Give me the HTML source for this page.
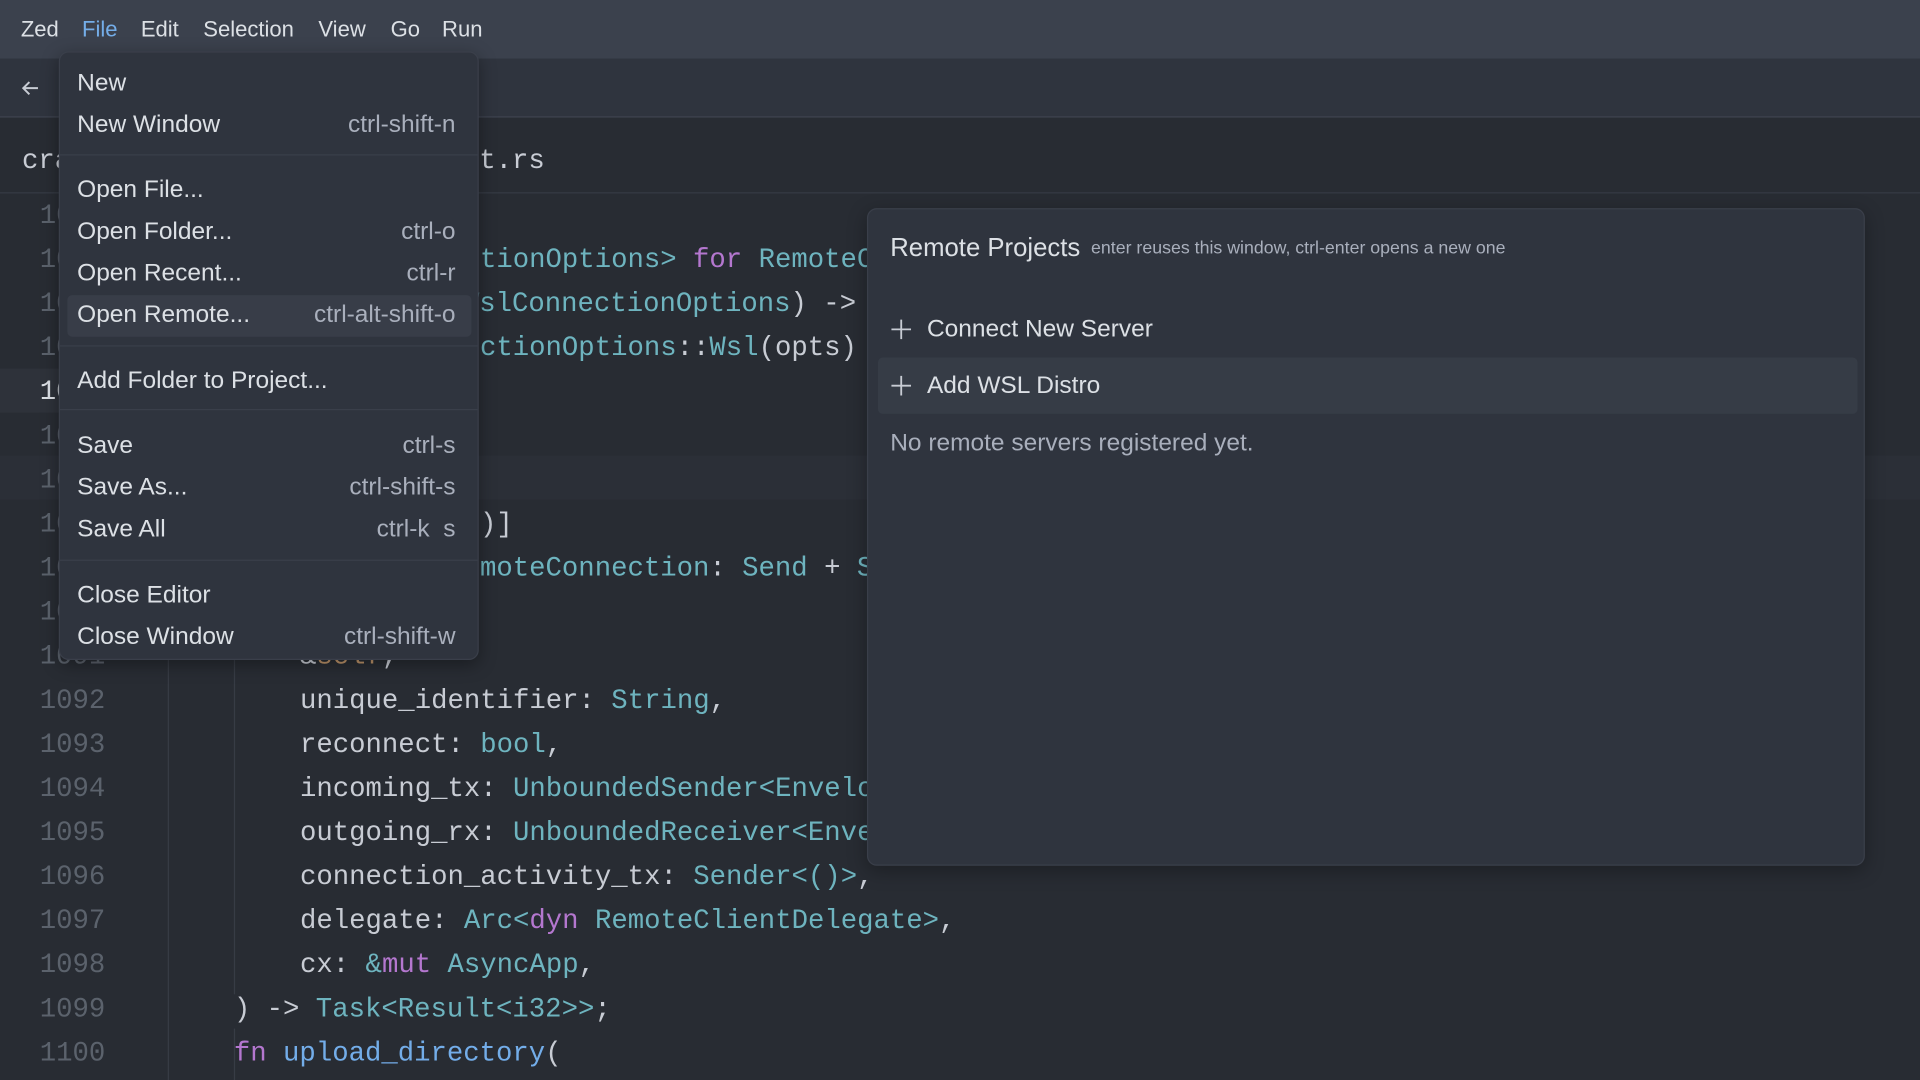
<!DOCTYPE html>
<html><head><meta charset="utf-8"><style>
*{margin:0;padding:0;box-sizing:border-box}
html,body{width:1920px;height:1080px;overflow:hidden;background:#282c33}
#w{position:absolute;left:0;top:0;width:1568px;height:882px;transform:scale(1.22449);transform-origin:0 0;background:#282c33;font-family:"Liberation Sans",sans-serif;color:#dce0e5}
.a{position:absolute;white-space:pre}
.m{font-family:"Liberation Mono",monospace;font-size:22.3px;color:#c8ccd4}
.ln{color:#5b626c;width:56px;text-align:right;left:30px}
.t{color:#6eb4bf}.k{color:#b477cf}.f{color:#73ade9}.o{color:#bf956a}
.mi{position:absolute;left:63px;right:18px;font-size:20px;color:#dce0e5;height:34px;line-height:34px}
.mi span{position:absolute;right:0;color:#a9afbc}
.sep{position:absolute;left:0;right:0;height:1px;background:#3a3f4a}
</style></head><body><div id="w">
<div class="a" style="left:0;top:0;width:1568px;height:48px;background:#3b414d"></div>
<div class="a" style="top:14px;left:17px;font-size:18px;color:#dce0e5">Zed</div>
<div class="a" style="top:14px;left:67px;font-size:18px;color:#74ade8">File</div>
<div class="a" style="top:14px;left:115px;font-size:18px">Edit</div>
<div class="a" style="top:14px;left:166px;font-size:18px">Selection</div>
<div class="a" style="top:14px;left:260px;font-size:18px">View</div>
<div class="a" style="top:14px;left:319px;font-size:18px">Go</div>
<div class="a" style="top:14px;left:361px;font-size:18px">Run</div>
<div class="a" style="left:0;top:48px;width:1568px;height:48px;background:#2f343e;border-bottom:1px solid #3f4450"></div>
<svg class="a" style="left:16px;top:63px" width="18" height="18" viewBox="0 0 18 18"><path d="M15 9H3M8 4L3 9l5 5" fill="none" stroke="#c8ccd4" stroke-width="1.6"/></svg>
<div class="a" style="left:0;top:97px;width:1568px;height:61px;background:#282c33;border-bottom:1px solid #363b45"></div>
<div class="a m" style="left:18px;top:118px">cra</div>
<div class="a m" style="left:378px;top:118px">nt.rs</div>
<div class="a" style="left:0;top:301px;width:137px;height:36px;background:#2e323a"></div>
<div class="a" style="left:0;top:372px;width:1568px;height:36px;background:#2b2f37"></div>
<div class="a" style="left:137px;top:160px;width:1px;height:722px;background:#373c45"></div>
<div class="a" style="left:191px;top:530px;width:1px;height:282px;background:#373c45"></div>
<div class="a" style="left:191px;top:840px;width:1px;height:42px;background:#373c45"></div>
<div class="a m ln" style="top:163px">1081</div>
<div class="a m ln" style="top:199px">1082</div>
<div class="a m ln" style="top:235px">1083</div>
<div class="a m ln" style="top:271px">1084</div>
<div class="a m ln" style="top:307px;color:#dce0e5">1085</div>
<div class="a m ln" style="top:343px">1086</div>
<div class="a m ln" style="top:379px">1087</div>
<div class="a m ln" style="top:415px">1088</div>
<div class="a m ln" style="top:451px">1089</div>
<div class="a m ln" style="top:487px">1090</div>
<div class="a m ln" style="top:523px">1091</div>
<div class="a m ln" style="top:559px">1092</div>
<div class="a m ln" style="top:595px">1093</div>
<div class="a m ln" style="top:631px">1094</div>
<div class="a m ln" style="top:667px">1095</div>
<div class="a m ln" style="top:703px">1096</div>
<div class="a m ln" style="top:739px">1097</div>
<div class="a m ln" style="top:775px">1098</div>
<div class="a m ln" style="top:811px">1099</div>
<div class="a m ln" style="top:847px">1100</div>
<div class="a m" style="left:392px;top:199px"><span class="t">tionOptions&gt;</span> <span class="k">for</span> <span class="t">RemoteC</span></div>
<div class="a m" style="left:378px;top:235px"><span class="t">WslConnectionOptions</span>) -&gt;</div>
<div class="a m" style="left:392px;top:271px"><span class="t">ctionOptions</span>::<span class="t">Wsl</span>(opts)</div>
<div class="a m" style="left:392px;top:415px">)]</div>
<div class="a m" style="left:392px;top:451px"><span class="t">moteConnection</span>: <span class="t">Send</span> + <span class="t">S</span></div>
<div class="a m" style="left:245px;top:523px">&amp;<span class="o">self</span>,</div>
<div class="a m" style="left:245px;top:559px">unique_identifier: <span class="t">String</span>,</div>
<div class="a m" style="left:245px;top:595px">reconnect: <span class="t">bool</span>,</div>
<div class="a m" style="left:245px;top:631px">incoming_tx: <span class="t">UnboundedSender&lt;Envelope</span></div>
<div class="a m" style="left:245px;top:667px">outgoing_rx: <span class="t">UnboundedReceiver&lt;Envel</span></div>
<div class="a m" style="left:245px;top:703px">connection_activity_tx: <span class="t">Sender&lt;()&gt;</span>,</div>
<div class="a m" style="left:245px;top:739px">delegate: <span class="t">Arc&lt;</span><span class="k">dyn</span> <span class="t">RemoteClientDelegate&gt;</span>,</div>
<div class="a m" style="left:245px;top:775px">cx: <span class="t">&amp;</span><span class="k">mut</span> <span class="t">AsyncApp</span>,</div>
<div class="a m" style="left:191px;top:811px">) -&gt; <span class="t">Task&lt;Result&lt;i32&gt;&gt;</span>;</div>
<div class="a m" style="left:191px;top:847px"><span class="k">fn</span> <span class="f">upload_directory</span>(</div>
<div class="a" style="left:708px;top:170px;width:815px;height:537px;background:#2f343e;border:1px solid #3a3f4a;border-radius:8px;box-shadow:0 4px 16px rgba(0,0,0,.3)">
 <div class="a" style="left:18px;top:20px;font-size:21px;color:#dce0e5">Remote Projects</div>
 <div class="a" style="left:182px;top:24px;font-size:14.5px;color:#a9afbc">enter reuses this window, ctrl-enter opens a new one</div>
 <div class="a" style="left:8px;top:121px;width:800px;height:46px;background:#363c46;border-radius:4px"></div>
 <svg class="a" style="left:18px;top:89px" width="18" height="18" viewBox="0 0 18 18"><path d="M9 1v16M1 9h16" stroke="#c8ccd4" stroke-width="1.5"/></svg>
 <div class="a" style="left:48px;top:87px;font-size:20px">Connect New Server</div>
 <svg class="a" style="left:18px;top:135px" width="18" height="18" viewBox="0 0 18 18"><path d="M9 1v16M1 9h16" stroke="#c8ccd4" stroke-width="1.5"/></svg>
 <div class="a" style="left:48px;top:133px;font-size:20px">Add WSL Distro</div>
 <div class="a" style="left:18px;top:180px;font-size:20px;color:#a9afbc">No remote servers registered yet.</div>
</div>
<div class="a" style="left:48px;top:42px;width:343px;height:497px;background:#2f343e;border:1px solid #3a3f4a;border-radius:8px;box-shadow:0 4px 14px rgba(0,0,0,.35)">
 <div class="mi" style="top:8px;left:14px">New</div>
 <div class="mi" style="top:42px;left:14px">New Window<span>ctrl-shift-n</span></div>
 <div class="sep" style="top:83px"></div>
 <div class="mi" style="top:95px;left:14px">Open File...</div>
 <div class="mi" style="top:129px;left:14px">Open Folder...<span>ctrl-o</span></div>
 <div class="mi" style="top:163px;left:14px">Open Recent...<span>ctrl-r</span></div>
 <div class="a" style="left:6px;top:198px;width:330px;height:34px;background:#383d48;border-radius:4px"></div>
 <div class="mi" style="top:197px;left:14px">Open Remote...<span>ctrl-alt-shift-o</span></div>
 <div class="sep" style="top:239px"></div>
 <div class="mi" style="top:251px;left:14px">Add Folder to Project...</div>
 <div class="sep" style="top:291px"></div>
 <div class="mi" style="top:304px;left:14px">Save<span>ctrl-s</span></div>
 <div class="mi" style="top:338px;left:14px">Save As...<span>ctrl-shift-s</span></div>
 <div class="mi" style="top:372px;left:14px">Save All<span>ctrl-k&nbsp; s</span></div>
 <div class="sep" style="top:414px"></div>
 <div class="mi" style="top:426px;left:14px">Close Editor</div>
 <div class="mi" style="top:460px;left:14px">Close Window<span>ctrl-shift-w</span></div>
</div>
</div></body></html>
